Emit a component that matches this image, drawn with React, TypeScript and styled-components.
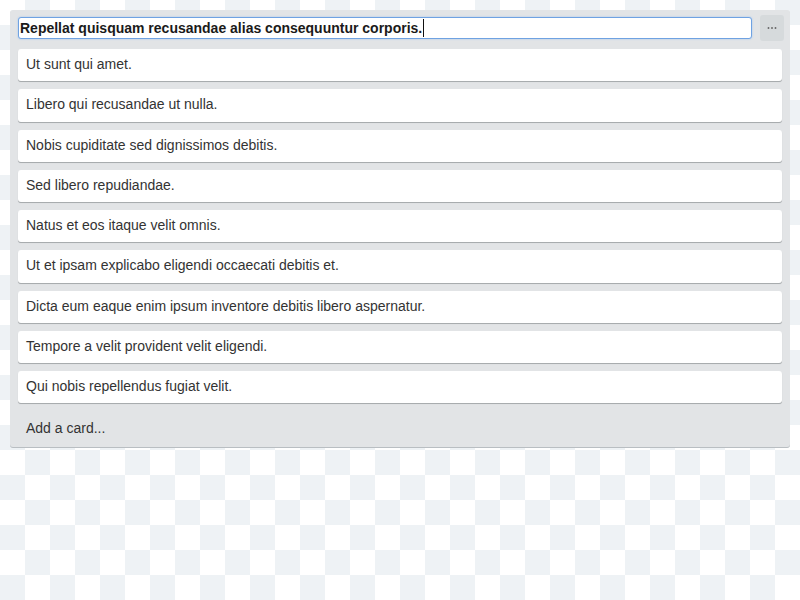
import React from "react";
import styled, { createGlobalStyle } from "styled-components";

const GlobalStyle = createGlobalStyle`
  html, body {
    margin: 0;
    padding: 0;
    width: 800px;
    height: 600px;
    overflow: hidden;
  }
  body {
    font-family: "Liberation Sans", Arial, sans-serif;
    background-color: #ffffff;
    background-image: conic-gradient(#eef2f5 0 25%, #ffffff 0 50%, #eef2f5 0 75%, #ffffff 0);
    background-size: 50px 50px;
    background-position: 0 0;
  }
`;

const Page = styled.div`
  padding: 10px;
  box-sizing: border-box;
  width: 800px;
`;

const List = styled.div`
  background: #e2e4e6;
  border-radius: 3px;
  box-shadow: 0 1px 0 #b9bec2;
  padding: 0 8px;
  display: flex;
  flex-direction: column;
`;

const Header = styled.div`
  display: flex;
  align-items: center;
  gap: 8px;
  padding: 5px 0 8px 0;
  margin-right: -2px;
`;

const TitleBox = styled.div`
  flex: 1;
  height: 22px;
  box-sizing: border-box;
  border: 1px solid #6fa2e2;
  box-shadow: 0 0 2px #9fc2ee;
  border-radius: 3px;
  background: #fff;
  padding: 0 1px;
  display: flex;
  align-items: center;
  font-weight: bold;
  font-size: 14px;
  color: #1a1a1a;
  white-space: nowrap;
  overflow: hidden;
`;

const Caret = styled.span`
  display: inline-block;
  width: 1px;
  height: 18px;
  background: #111;
  margin-left: 1px;
`;

const MenuButton = styled.button`
  width: 24px;
  height: 26px;
  border: none;
  border-radius: 3px;
  background: #d6dadc;
  padding: 0;
  display: flex;
  align-items: center;
  justify-content: center;
  cursor: pointer;
`;

const Cards = styled.div`
  display: flex;
  flex-direction: column;
  gap: 8px;
`;

const Card = styled.div`
  background: #fff;
  border-radius: 3px;
  box-shadow: 0 1px 0 #a8acae, 0 1px 1px rgba(0, 0, 0, 0.15);
  padding: 6px 8px 8px 8px;
  font-size: 14px;
  line-height: 18.25px;
  color: #333;
`;

const AddCard = styled.div`
  padding: 17px 8px 10px 8px;
  font-size: 14px;
  line-height: 17px;
  color: #333;
`;

const title = "Repellat quisquam recusandae alias consequuntur corporis.";

const cards = [
  "Ut sunt qui amet.",
  "Libero qui recusandae ut nulla.",
  "Nobis cupiditate sed dignissimos debitis.",
  "Sed libero repudiandae.",
  "Natus et eos itaque velit omnis.",
  "Ut et ipsam explicabo eligendi occaecati debitis et.",
  "Dicta eum eaque enim ipsum inventore debitis libero aspernatur.",
  "Tempore a velit provident velit eligendi.",
  "Qui nobis repellendus fugiat velit.",
];

function DotsIcon() {
  return (
    <svg width="10" height="4" viewBox="0 0 10 4" aria-hidden="true">
      <circle cx="1.5" cy="2" r="0.95" fill="#666" />
      <circle cx="5" cy="2" r="0.95" fill="#666" />
      <circle cx="8.5" cy="2" r="0.95" fill="#666" />
    </svg>
  );
}

export default function App() {
  return (
    <>
      <GlobalStyle />
      <Page>
        <List>
          <Header>
            <TitleBox>
              {title}
              <Caret />
            </TitleBox>
            <MenuButton aria-label="List actions">
              <DotsIcon />
            </MenuButton>
          </Header>
          <Cards>
            {cards.map((c) => (
              <Card key={c}>{c}</Card>
            ))}
          </Cards>
          <AddCard>Add a card...</AddCard>
        </List>
      </Page>
    </>
  );
}
